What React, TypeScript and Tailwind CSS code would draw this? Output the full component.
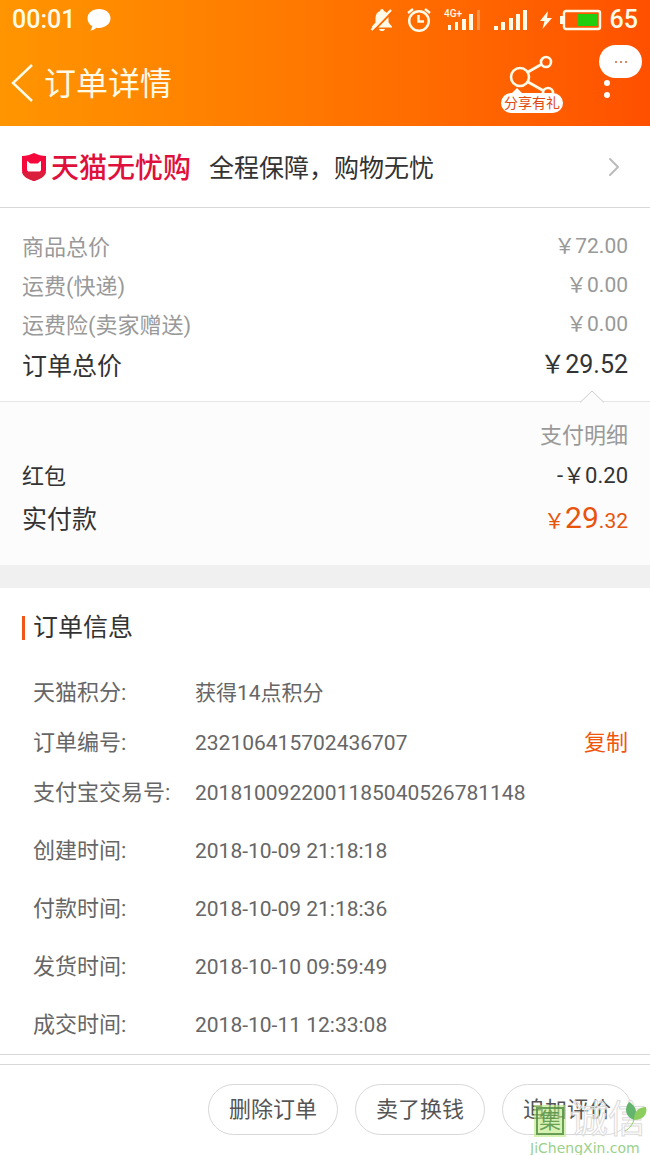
import { ChevronRight } from "lucide-react";

const prices = [
  { label: "商品总价", value: "￥72.00" },
  { label: "运费(快递)", value: "￥0.00" },
  { label: "运费险(卖家赠送)", value: "￥0.00" },
];

const orderInfo = [
  { label: "天猫积分:", value: "获得14点积分" },
  { label: "订单编号:", value: "232106415702436707", copy: true },
  { label: "支付宝交易号:", value: "2018100922001185040526781148" },
  { label: "创建时间:", value: "2018-10-09 21:18:18", time: true },
  { label: "付款时间:", value: "2018-10-09 21:18:36", time: true },
  { label: "发货时间:", value: "2018-10-10 09:59:49", time: true },
  { label: "成交时间:", value: "2018-10-11 12:33:08", time: true },
];

const actions = ["删除订单", "卖了换钱", "追加评价"];

function StatusBar() {
  return (
    <div className="flex h-10 items-center justify-between px-3 text-[25px] font-medium leading-10">
      <div className="flex items-center gap-3">
        <span>00:01</span>
        <svg width="24" height="24" viewBox="0 0 24 24" fill="#fff" aria-hidden="true">
          <path d="M12 1C5.500 1 .5 5 .5 10.300c0 3.500 2 6.200 4.700 7.900-.2 1.800-.8 3-2 4.200 2.500 0 4.700-1.200 6.200-2.700.8.100 1.700.2 2.600.2 6.500 0 11.500-4.200 11.500-9.600S18.500 1 12 1z" />
        </svg>
      </div>
      <div className="flex items-center">
        <svg width="24" height="24" viewBox="0 0 24 24" className="mr-3" aria-hidden="true">
          <path d="M12 1c1.200 0 1.800.8 1.800 1.900C17 3.800 18.500 6.500 18.500 10v4.500L22 18.500v1H2v-1l3.500-4V10c0-3.500 1.700-6.200 4.700-7.100C10.200 1.800 10.800 1 12 1zM9 21h6c-.4 1.500-1.500 2-3 2s-2.600-.5-3-2z" fill="currentColor" />
          <path d="M3 23.500 22.500 3.500" stroke="#ff6a00" strokeWidth="2" />
          <path d="M1.500 22 21 2" stroke="currentColor" strokeWidth="2.500" />
        </svg>
        <svg width="26" height="26" viewBox="0 0 26 26" fill="none" stroke="currentColor" strokeWidth="2.400" className="mr-3" aria-hidden="true">
          <circle cx="13" cy="14" r="9.800" />
          <path d="M12.500 8v6.500H18M2 6l5-4M24 6l-5-4" />
        </svg>
        <svg width="38" height="24" viewBox="0 0 38 24" fill="currentColor" className="mr-3" aria-hidden="true">
          <text x="0" y="9" fontSize="10" fontWeight="500">4G+</text>
          <path d="M4 17h3v5H4zM11 14h3v8h-3zM18 11h4v11h-4zM25 6h4v16h-4z" />
          <path d="M33 2h3v20h-3z" opacity=".3" />
        </svg>
        <svg width="34" height="24" viewBox="0 0 34 24" fill="currentColor" className="mr-3" aria-hidden="true">
          <path d="M0 18h4v4H0zM7 14h4v8H7zM15 10h4v12h-4zM22 6h4v16h-4zM29 2h4v20h-4z" />
        </svg>
        <svg width="12" height="20" viewBox="0 0 12 20" fill="currentColor" className="mr-2" aria-hidden="true">
          <path d="M8 1 0 11h4.500L2.500 19 12 8H7z" />
        </svg>
        <svg width="42" height="24" viewBox="0 0 42 24" className="mr-2" aria-hidden="true">
          <path d="M0 8h3v8H0z" fill="currentColor" />
          <rect x="4" y="3" width="36" height="18" rx="2" fill="none" stroke="currentColor" strokeWidth="2.400" />
          <path d="M17 6h20v12H17z" fill="#22cc0e" />
        </svg>
        <span>65</span>
      </div>
    </div>
  );
}

function Header() {
  return (
    <header className="bg-linear-to-r from-[#ff9500] to-[#ff5000] text-[#fffbe8]">
      <StatusBar />
      <div className="flex h-[86px] items-center pr-2">
        <button type="button" aria-label="返回" className="flex w-11 justify-start pl-2">
          <svg width="26" height="40" viewBox="0 0 26 40" fill="none" stroke="currentColor" strokeWidth="2.500" aria-hidden="true">
            <path d="M24 2 5 20l19 18" />
          </svg>
        </button>
        <h1 className="flex-1 pt-0.5 text-[32px] leading-10">订单详情</h1>
        <button type="button" className="mr-9 flex w-[62px] flex-col items-center pt-0.5">
          <svg width="46" height="38" viewBox="0 0 46 38" fill="none" stroke="currentColor" strokeWidth="2.600" aria-hidden="true">
            <circle cx="11" cy="22" r="9" />
            <circle cx="37" cy="7" r="5" />
            <circle cx="39" cy="38" r="5" />
            <path d="m19 17 14-8M19 27l16 9" />
            <path d="m3 38 5-5 5 5z" fill="#fff" stroke="none" />
          </svg>
          <span className="w-full rounded-full bg-white text-center text-[14px] leading-5 text-[#e04a10]">分享有礼</span>
        </button>
        <button type="button" aria-label="更多" className="mt-[5px] flex w-[43px] flex-col items-center self-start">
          <span className="flex h-[33px] w-full items-center justify-center gap-[3px] rounded-full bg-white">
            <i className="size-[2px] rounded-full bg-[#d06030]" />
            <i className="size-[2px] rounded-full bg-[#d06030]" />
            <i className="size-[2px] rounded-full bg-[#d06030]" />
          </span>
          <span className="mr-7 flex flex-col gap-[6px] pt-[2px]">
            <i className="size-[6px] rounded-full bg-white" />
            <i className="size-[6px] rounded-full bg-white" />
          </span>
        </button>
      </div>
    </header>
  );
}

function Guarantee() {
  return (
    <a href="#guarantee" className="flex h-[82px] items-center border-b border-[#d8d8d8] pl-[21px] pr-5">
      <svg width="26" height="28" viewBox="0 0 26 28" className="mr-1" aria-hidden="true">
        <path d="M13 0c4 2 8 3 12 3v14c0 6-6 9-12 11C7 26 1 23 1 17V3c4 0 8-1 12-3z" fill="#f5083c" />
        <path d="M1 19h24c-1 5-6 7-12 9C7 26 2 24 1 19z" fill="#d91f3c" />
        <path d="M6 8c2 0 2 2.500 3.500 2.500h7C18 10.500 18 8 20 8v8.500c0 1.500-1 2-2 2H8c-1 0-2-.5-2-2z" fill="#fff" />
      </svg>
      <strong className="pt-1 text-[28px] font-medium leading-10 text-[#e0103c]">天猫无忧购</strong>
      <span className="ml-[18px] flex-1 pt-1 text-[25px] leading-10 text-[#333]">全程保障，购物无忧</span>
      <ChevronRight size={32} strokeWidth={1.5} className="text-[#bbb]" />
    </a>
  );
}

function Watermark() {
  return (
    <div className="pointer-events-none absolute bottom-0 right-0 w-[120px]">
      <div className="mb-1 flex items-end gap-1 pl-1">
        <span className="flex size-8 items-center justify-center bg-[#b9ea80]/60">
          <span className="flex size-[28px] items-center justify-center border-2 border-[#4e8a3e]/80 text-[22px] leading-6 text-[#4e8a3e]/80">集</span>
        </span>
        <span className="whitespace-nowrap text-[38px] leading-9 text-white/50 [-webkit-text-stroke:1px_#dcdcdc]">诚信</span>
      </div>
      <svg width="26" height="32" viewBox="0 0 26 32" className="absolute right-0 top-0" aria-hidden="true">
        <path d="M10 19C1 16 0 7 5 1c7 4 9 10 5 18z" fill="#63b56d" />
        <path d="M10 19c0-8 4-13 12-13 2 7-3 13-12 13z" fill="#8cce5e" />
        <path d="M10 18c-1 5-4 9-9 12" fill="none" stroke="#8cce5e" />
      </svg>
      <p className="font-['DejaVu_Sans',sans-serif] text-[14px] leading-[14px] text-[#9bd08a]">JiChengXin.com</p>
    </div>
  );
}

export default function App() {
  return (
    <div className="relative bg-white font-[Roboto,'Noto_Sans_CJK_SC',sans-serif]">
      <Header />
      <main>
        <Guarantee />

        <section className="px-[22px] pb-[14px] pt-5 text-[22px] text-[#999]">
          {prices.map((p) => (
            <div key={p.label} className="flex h-[39px] items-center justify-between">
              <span>{p.label}</span>
              <span className="pb-0.5 text-[21px]">{p.value}</span>
            </div>
          ))}
          <div className="flex h-[42px] items-center justify-between pt-0.5 text-[25px] text-[#333]">
            <span>订单总价</span>
            <span className="pb-1">￥29.52</span>
          </div>
        </section>

        <section className="relative border-t border-[#e5e5e5] bg-[#fcfcfc] px-[22px] pb-6 pt-4 text-[22px] text-[#333]">
          <svg width="24" height="13" viewBox="0 0 24 13" className="absolute -top-3 right-[46px]" aria-hidden="true">
            <path d="M0 12.500 12 1l12 11.500" fill="#fcfcfc" stroke="#ccc" />
          </svg>
          <p className="text-right leading-9 text-[#999]">支付明细</p>
          <div className="flex h-11 items-center justify-between">
            <span>红包</span>
            <span className="pb-0.5">-￥0.20</span>
          </div>
          <div className="flex h-[43px] items-center justify-between">
            <span className="text-[25px]">实付款</span>
            <span className="pb-1 text-[21px] text-[#e8540c]">
              ￥<span className="text-[30px]">29</span>.32
            </span>
          </div>
        </section>

        <div className="h-[23px] bg-[#f0f0f0]" />

        <section className="px-[22px] pb-1 pt-5 text-[22px] text-[#666]">
          <div className="flex h-10 items-center gap-2">
            <span className="h-6 w-[3px] bg-[#f0561a]" />
            <h2 className="text-[25px] leading-10 text-[#333]">订单信息</h2>
          </div>
          <dl className="pl-[11px] pt-5">
            {orderInfo.map((row) => (
              <div key={row.label} className={row.time ? "flex h-[58px] items-end" : "flex h-[50px] items-end"}>
                <dt className="w-[162px] leading-[50px]">{row.label}</dt>
                <dd className="flex-1 text-[21px] leading-[50px]">{row.value}</dd>
                {row.copy && (
                  <dd>
                    <button type="button" className="leading-[50px] text-[#f0560c]">复制</button>
                  </dd>
                )}
              </div>
            ))}
          </dl>
        </section>
      </main>

      <div className="h-[11px] border-y border-[#d8d8d8]" />
      <footer className="flex justify-end gap-[17px] px-[18px] pb-5 pt-[19px]">
        {actions.map((label) => (
          <button key={label} type="button" className="h-[51px] w-[130px] rounded-full border border-[#d8d8d8] text-[22px] text-[#555]">
            {label}
          </button>
        ))}
      </footer>
      <Watermark />
    </div>
  );
}
